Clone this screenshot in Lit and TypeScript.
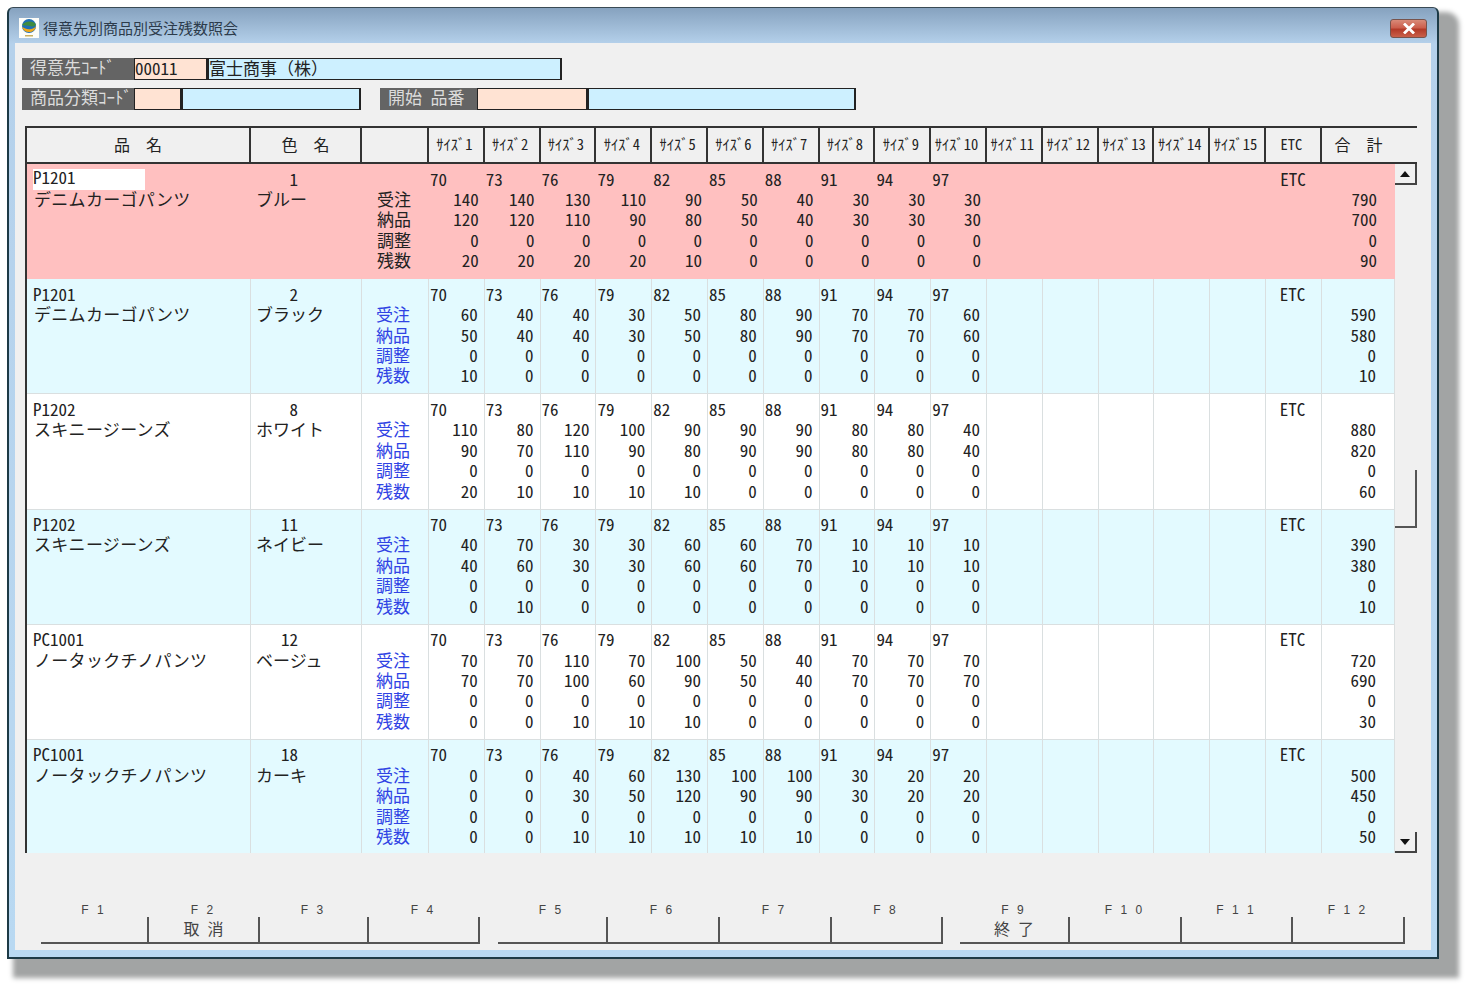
import { LitElement, html, css } from "lit";
import { customElement } from "lit/decorators.js";

interface Row {
  code: string; name: string; colorNo: string; color: string;
  qty: number[][]; tot: number[]; tone: string;
}
const sizes = [70, 73, 76, 79, 82, 85, 88, 91, 94, 97];
const zero = [0, 0, 0, 0, 0, 0, 0, 0, 0, 0];
const labels = ["受注", "納品", "調整", "残数"];
const rows: Row[] = [
  { code: "P1201", name: "デニムカーゴパンツ", colorNo: "1", color: "ブルー", tone: "pink", tot: [790, 700, 0, 90], qty: [
    [140, 140, 130, 110, 90, 50, 40, 30, 30, 30], [120, 120, 110, 90, 80, 50, 40, 30, 30, 30], zero, [20, 20, 20, 20, 10, 0, 0, 0, 0, 0]] },
  { code: "P1201", name: "デニムカーゴパンツ", colorNo: "2", color: "ブラック", tone: "cyan", tot: [590, 580, 0, 10], qty: [
    [60, 40, 40, 30, 50, 80, 90, 70, 70, 60], [50, 40, 40, 30, 50, 80, 90, 70, 70, 60], zero, [10, 0, 0, 0, 0, 0, 0, 0, 0, 0]] },
  { code: "P1202", name: "スキニージーンズ", colorNo: "8", color: "ホワイト", tone: "white", tot: [880, 820, 0, 60], qty: [
    [110, 80, 120, 100, 90, 90, 90, 80, 80, 40], [90, 70, 110, 90, 80, 90, 90, 80, 80, 40], zero, [20, 10, 10, 10, 10, 0, 0, 0, 0, 0]] },
  { code: "P1202", name: "スキニージーンズ", colorNo: "11", color: "ネイビー", tone: "cyan", tot: [390, 380, 0, 10], qty: [
    [40, 70, 30, 30, 60, 60, 70, 10, 10, 10], [40, 60, 30, 30, 60, 60, 70, 10, 10, 10], zero, [0, 10, 0, 0, 0, 0, 0, 0, 0, 0]] },
  { code: "PC1001", name: "ノータックチノパンツ", colorNo: "12", color: "ベージュ", tone: "white", tot: [720, 690, 0, 30], qty: [
    [70, 70, 110, 70, 100, 50, 40, 70, 70, 70], [70, 70, 100, 60, 90, 50, 40, 70, 70, 70], zero, [0, 0, 10, 10, 10, 0, 0, 0, 0, 0]] },
  { code: "PC1001", name: "ノータックチノパンツ", colorNo: "18", color: "カーキ", tone: "cyan", tot: [500, 450, 0, 50], qty: [
    [0, 0, 40, 60, 130, 100, 100, 30, 20, 20], [0, 0, 30, 50, 120, 90, 90, 30, 20, 20], zero, [0, 0, 10, 10, 10, 10, 10, 0, 0, 0]] },
];
const keyGroups = [
  [["F 1", "", 108], ["F 2", "取 消", 111], ["F 3", "", 109], ["F 4", "", 111]],
  [["F 5", "", 110], ["F 6", "", 112], ["F 7", "", 112], ["F 8", "", 111]],
  [["F 9", "終 了", 110], ["F 1 0", "", 112], ["F 1 1", "", 111], ["F 1 2", "", 112]],
] as [string, string, number][][];

@customElement("app-root")
export class AppRoot extends LitElement {
  static styles = css`
    :host { display: block; width: 1472px; height: 986px; background: #fff; overflow: hidden;
      font-family: "Noto Sans CJK JP", "Noto Sans", sans-serif; font-feature-settings: "hwid"; color: #222; }
    .page { padding: 7px 0 0 7px; }
    .window { box-sizing: border-box; width: 1432px; height: 952px; display: flex; flex-direction: column;
      border: 2px solid #1d3a46; border-top: 1px solid #3a4a55; border-radius: 6px 6px 0 0; padding: 0 6px 7px;
      background: linear-gradient(#86a2bf 0, #b5d1eb 36px, #b9d9f2 100%);
      box-shadow: 13px 12px 5px 7px #a2a4a4; }
    .title { height: 35px; flex: none; display: flex; align-items: center; gap: 4px; margin-left: 4px; margin-right: 4px; }
    .title-text { font-size: 15px; color: #2c3b4b; flex: 1; padding-top: 4px; }
    .app-icon { margin-top: 4px; flex: none; }
    .close { width: 37px; height: 19px; margin-top: 6px; box-sizing: border-box; border: 1px solid #77534c; border-radius: 3px;
      background: linear-gradient(#d98a78 0, #cc5f4d 45%, #b33a28 55%, #c9604a 100%); display: flex; align-items: center; justify-content: center; }
    .client { flex: 1; background: #f0f0f0; display: flex; flex-direction: column; min-height: 0; }
    .form { padding: 15px 0 0 7px; display: flex; flex-direction: column; gap: 8px; }
    .form-row { display: flex; height: 22px; }
    .lab { background: #646464; color: #dcdcdc; font-size: 17px; line-height: 18px; padding-left: 8px; box-sizing: border-box; white-space: pre; }
    .fld { box-sizing: border-box; border: 1px solid #222; border-width: 1px 2px 1px 1px; font-size: 17px; line-height: 17px; white-space: pre; color: #222; }
    .fld.full { font-feature-settings: normal; }
    .peach { background: #ffe3d3; }
    .sky { background: #cdf0ff; }
    .w112 { width: 112px; } .w97 { width: 97px; margin-left: 19px; }
    .w74 { width: 74px; } .w353 { width: 354px; }
    .w48 { width: 48px; } .w178 { width: 179px; }
    .w110 { width: 111px; } .w268 { width: 268px; }
    .table { margin: 16px 0 0 10px; width: 1392px; box-sizing: border-box; border-left: 2px solid #333; height: 727px; display: flex; flex-direction: column; }
    .head { display: grid; grid-template-columns: 224px 111px 67px repeat(15, 55.8px) 56px 95px; height: 38px; box-sizing: border-box;
      border-top: 2px solid #333; flex: none; }
    .hc { border-right: 2px solid #333; border-bottom: 2px solid #333; box-sizing: border-box; display: flex; align-items: center; justify-content: center;
      font-size: 16px; color: #222; white-space: pre; font-feature-settings: normal; padding-bottom: 3px; }
    .hc.sz { font-size: 14.5px; padding-right: 3px; font-feature-settings: "hwid"; }
    .hc.tot { border-right: 0; padding-right: 22px; }
    .main { display: flex; flex: 1; min-height: 0; }
    .rows { width: 1368px; overflow: hidden; flex: none; }
    .row { display: grid; grid-template-columns: 224px 111px 67px repeat(15, 55.8px) 56px 73px; height: 115.2px; box-sizing: border-box;
      font-size: 17px; line-height: 20.4px; color: #222; }
    .row.cyan { background: #e3faff; }
    .row.white { background: #fff; }
    .row.pink { background: #ffc0c0; }
    .row.cyan, .row.white { border-bottom: 1px solid #dadfe0; }
    .c { box-sizing: border-box; padding-top: 4.5px; white-space: pre; }
    .row.cyan .c, .row.white .c { border-right: 1px solid #dadfe0; }
    .c.n { padding-left: 6px; }
    .nm { letter-spacing: 0.3px; padding-left: 1px; }
    .sel { display: block; width: 112px; height: 21px; background: #fff; margin: 0.5px 0 -1.1px; line-height: 16px; }
    .c.col { padding-left: 5px; }
    .no { display: block; width: 42px; text-align: right; }
    .c.lbl { text-align: right; padding-right: 18px; }
    .blue .c.lbl { color: #2f43e4; }
    .c.sz { text-align: right; padding-right: 6px; }
    .c.sz .s { display: block; text-align: left; padding-left: 1px; }
    .c.etc { text-align: center; padding-right: 2px; }
    .c.total { text-align: right; padding-right: 18px; }
    .bar { width: 22px; flex: none; display: flex; flex-direction: column; }
    .btn { box-sizing: border-box; height: 21px; flex: none; border-right: 2px solid #444; border-bottom: 2px solid #444; display: flex; align-items: center; justify-content: center; }
    .gap1 { height: 285px; flex: none; }
    .thumb { height: 58px; flex: none; box-sizing: border-box; border-right: 2px solid #555; border-bottom: 2px solid #555; }
    .gap2 { flex: 1; }
    .foot { margin-top: 51px; padding-left: 26px; display: flex; gap: 17.5px; }
    .grp { display: flex; }
    .key { box-sizing: border-box; height: 40px; display: flex; flex-direction: column; align-items: center; }
    .fk { font-family: "Liberation Sans", sans-serif; font-size: 12px; line-height: 13px; letter-spacing: 2px; color: #444; word-spacing: 1px; white-space: pre; padding-right: 3px; }
    .box { align-self: stretch; height: 27px; box-sizing: border-box; border-right: 2px solid #555; border-bottom: 2px solid #555; text-align: center;
      font-size: 16px; line-height: 23px; color: #444; }
  `;

  private cols(r: Row) {
    const blue = r.tone !== "pink";
    return html`<div class="row ${r.tone} ${blue ? "blue" : ""}">
      <div class="c n">${r.tone === "pink" ? html`<span class="sel">${r.code}</span>` : html`<div>${r.code}</div>`}<div class="nm">${r.name}</div></div>
      <div class="c col"><span class="no">${r.colorNo}</span>${r.color}</div>
      <div class="c lbl">${"\n"}${labels.join("\n")}</div>
      ${sizes.map((s, i) => html`<div class="c sz"><span class="s">${s}</span>${r.qty.map((q) => q[i]).join("\n")}</div>`)}
      ${[0, 0, 0, 0, 0].map(() => html`<div class="c"></div>`)}
      <div class="c etc">ETC</div>
      <div class="c total">${"\n"}${r.tot.join("\n")}</div>
    </div>`;
  }

  render() {
    const sizeHeads = Array.from({ length: 15 }, (_, i) => `ｻｲｽﾞ${i + 1}`);
    return html`<div class="page"><div class="window">
      <div class="title">
        <svg class="app-icon" width="20" height="20" viewBox="0 0 20 20">
          <rect width="20" height="20" fill="#fdfdf8"/>
          <circle cx="10" cy="8" r="7" fill="#1f6fb5"/>
          <path d="M3 7c3-4 10-5 14-1-1 3-3 3-6 2S5 8 3 7z" fill="#3f8c3f"/>
          <path d="M3 9c3 1 5 3 9 2s4-2 5-3c-.5 4-3.500 6-7 6s-6-2-7-5z" fill="#f0a818"/>
          <path d="M6 17h8v1.500H6z" fill="#c9b060"/>
        </svg>
        <div class="title-text">得意先別商品別受注残数照会</div>
        <div class="close"><svg width="14" height="11" viewBox="0 0 14 11"><path d="M3 1.500l8 8M11 1.500l-8 8" stroke="#fff" stroke-width="2.800" stroke-linecap="square"/></svg></div>
      </div>
      <div class="client">
        <div class="form">
          <div class="form-row">
            <div class="lab w112">得意先ｺｰﾄﾞ</div>
            <div class="fld peach w74">00011</div>
            <div class="fld sky w353 full">富士商事（株）</div>
          </div>
          <div class="form-row">
            <div class="lab w112">商品分類ｺｰﾄﾞ</div>
            <div class="fld peach w48"></div>
            <div class="fld sky w178"></div>
            <div class="lab w97">開始 品番</div>
            <div class="fld peach w110"></div>
            <div class="fld sky w268"></div>
          </div>
        </div>
        <div class="table">
          <div class="head">
            <div class="hc">品　名</div>
            <div class="hc">色　名</div>
            <div class="hc"></div>
            ${sizeHeads.map((h) => html`<div class="hc sz">${h}</div>`)}
            <div class="hc sz">ETC</div>
            <div class="hc tot">合　計</div>
          </div>
          <div class="main">
            <div class="rows">${rows.map((r) => this.cols(r))}</div>
            <div class="bar">
              <div class="btn"><svg width="10" height="6" viewBox="0 0 10 6"><path d="M5 0l5 6H0z" fill="#111"/></svg></div>
              <div class="gap1"></div>
              <div class="thumb"></div>
              <div class="gap2"></div>
              <div class="btn"><svg width="10" height="6" viewBox="0 0 10 6"><path d="M0 0h10L5 6z" fill="#111"/></svg></div>
            </div>
          </div>
        </div>
        <div class="foot">
          ${keyGroups.map((g) => html`<div class="grp">
            ${g.map(([f, cap, w]) => html`<div class="key" style="width:${w}px"><div class="fk">${f}</div><div class="box">${cap}</div></div>`)}
          </div>`)}
        </div>
      </div>
    </div></div>`;
  }
}
